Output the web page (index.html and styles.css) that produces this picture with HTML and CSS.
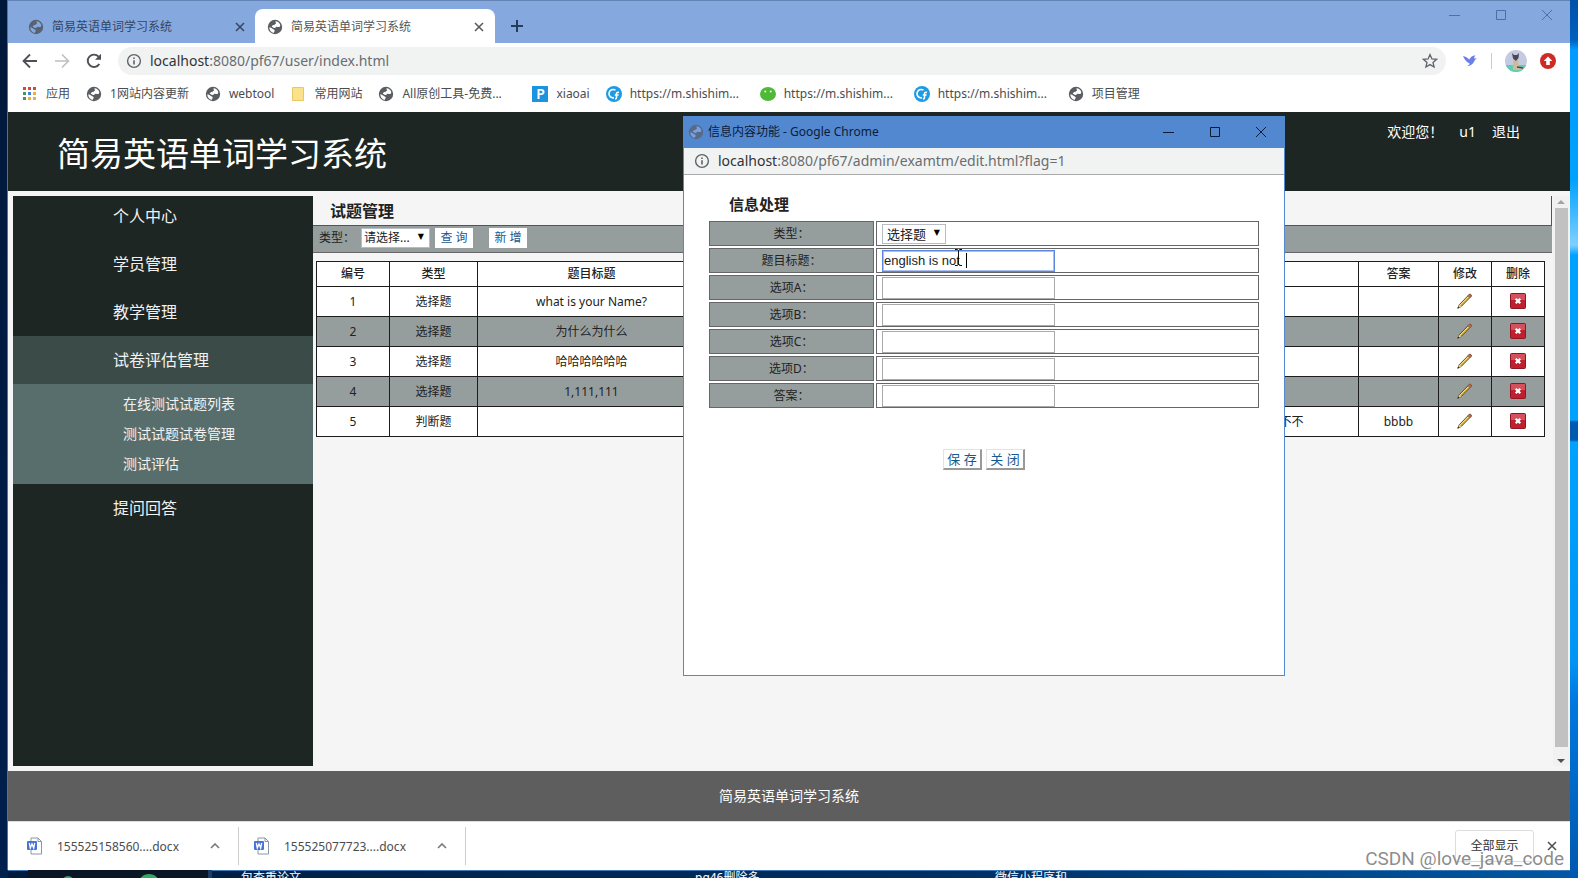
FILE: index.html
```html
<!DOCTYPE html>
<html lang="zh-CN">
<head>
<meta charset="utf-8">
<title>简易英语单词学习系统</title>
<link rel="stylesheet" href="styles.css">
</head>
<body>
<svg class="defs" aria-hidden="true">
  <symbol id="globe" viewBox="0 0 16 16"><circle cx="8" cy="8" r="7.200" fill="#5a5d61"/><path d="M8.600 2.200c1.600-.1 3.400 1.200 4.300 2.700.6 1.400.4 2.600-.6 3-1 .3-1.900-.4-2.800-.2-1.100.2-.8 1.500-2 1.400-1-.1-1.300-.9-2.300-1.100-.6-.2-.3-1.200.4-1.500.9-.3 1.700.1 1.900-.7.2-.9 1.500-.5 1.500-1.500 0-.8-.9-1.200-.4-2.100zM2.300 8.200c1.100.3 2.300.7 3.200 1.500.9.900 2.200.7 2.200 1.900 0 1-.9 1.300-1 2.400-2.600-.5-4.500-3-4.400-5.800z" fill="#fff"/></symbol>
  <symbol id="globe-dim" viewBox="0 0 16 16"><circle cx="8" cy="8" r="7.200" fill="#5a6170"/><path d="M8.600 2.200c1.600-.1 3.400 1.200 4.300 2.700.6 1.400.4 2.600-.6 3-1 .3-1.900-.4-2.800-.2-1.100.2-.8 1.500-2 1.400-1-.1-1.300-.9-2.300-1.100-.6-.2-.3-1.200.4-1.500.9-.3 1.700.1 1.900-.7.2-.9 1.500-.5 1.500-1.500 0-.8-.9-1.200-.4-2.100zM2.300 8.200c1.100.3 2.300.7 3.200 1.500.9.900 2.200.7 2.200 1.900 0 1-.9 1.300-1 2.400-2.600-.5-4.500-3-4.400-5.800z" fill="#85a9df"/></symbol>
  <symbol id="info" viewBox="0 0 16 16"><circle cx="8" cy="8" r="6.400" fill="none" stroke="#5f6368" stroke-width="1.400"/><path d="M7.200 7.200h1.600v4.300H7.200zM7.200 4.400h1.600V6H7.200z" fill="#5f6368"/></symbol>
  <symbol id="cross" viewBox="0 0 10 10"><path d="M1 1l8 8M9 1l-8 8" fill="none" stroke="currentColor" stroke-width="1.500"/></symbol>
  <symbol id="thincross" viewBox="0 0 12 12"><path d="M1 1l10 10M11 1L1 11" fill="none" stroke="currentColor"/></symbol>
  <symbol id="square" viewBox="0 0 12 12"><path d="M1.500 1.500h9v9h-9z" fill="none" stroke="currentColor"/></symbol>
  <symbol id="dash" viewBox="0 0 12 12"><path d="M0 6.500h11" fill="none" stroke="currentColor"/></symbol>
  <symbol id="cf" viewBox="0 0 16 16"><circle cx="8" cy="8" r="8" fill="#1d9be3"/><path d="M9.500 4.200A4.200 4.200 0 1 0 8 11.800M13 6.500c-2-.6-2.500.4-2.500 1.500v3.500c0 1-.6 1.500-1.500 1.500M8.800 9h3.800" fill="none" stroke="#fff" stroke-width="1.600"/></symbol>
  <symbol id="doc" viewBox="0 0 16 18"><path d="M4 1h7l3.500 3.500V17H4z" fill="#fff" stroke="#8797a8"/><path d="M11 1v3.500h3.500" fill="none" stroke="#8797a8"/><rect y="4" width="10" height="9" rx="1" fill="#4472d8"/><path d="M2.300 6l1 5L5 7l1.700 4 1-5" fill="none" stroke="#fff" stroke-width="1.300"/></symbol>
  <symbol id="up" viewBox="0 0 10 6"><path d="M1 5l4-4 4 4" fill="none" stroke="#777" stroke-width="1.600"/></symbol>
  <symbol id="pencil" viewBox="0 0 16 16"><path d="M.8 15.200l1.500-3.500L12.300 1.400c1-.8 2.700.7 2 1.800L4.200 13.500z" fill="#e3b63a" stroke="#4f3f1a" stroke-width=".9"/><path d="M3 12L12.300 2.700" stroke="#f9e48c" stroke-width=".9"/><path d="M12 1.600c1-.9 3 .8 2.200 1.900l-1.300 1.200-2.200-1.900z" fill="#c66a50" stroke="#7d4a3c" stroke-width=".5"/><path d="M.8 15.200l1.500-3.500 1.900 1.800z" fill="#e5d3a4"/><path d="M.5 15.500l.8-2 1.200 1.200z" fill="#222"/></symbol>
  <symbol id="delete" viewBox="0 0 16 16"><rect x=".5" y=".5" width="15" height="15" rx="1" fill="#bf1f2f" stroke="#8f1522"/><path d="M1 1h14v6H1z" fill="#d4505c"/><path d="M5.700 5.700l4.600 4.600M10.300 5.700l-4.600 4.600" stroke="#fff" stroke-width="2.200"/></symbol>
</svg>

<div class="desktop">
  <div class="browser">
    <div class="tabstrip">
      <div class="tab"><svg class="i16"><use href="#globe-dim"/></svg><span class="tab-name">简易英语单词学习系统</span><button class="plain" aria-label="关闭标签页"><svg class="i10"><use href="#cross"/></svg></button></div>
      <div class="tab tab-active"><svg class="i16"><use href="#globe"/></svg><span class="tab-name">简易英语单词学习系统</span><button class="plain" aria-label="关闭标签页"><svg class="i10"><use href="#cross"/></svg></button></div>
      <button class="plain new-tab" aria-label="新标签页"><svg width="14" height="14" viewBox="0 0 14 14"><path d="M7 1v12M1 7h12" stroke="#263d5c" stroke-width="2"/></svg></button>
      <div class="win-controls">
        <button class="plain" aria-label="最小化"><svg class="i12"><use href="#dash"/></svg></button>
        <button class="plain" aria-label="最大化"><svg class="i12"><use href="#square"/></svg></button>
        <button class="plain" aria-label="关闭"><svg class="i12"><use href="#thincross"/></svg></button>
      </div>
    </div>

    <div class="toolbar">
      <button class="plain" aria-label="后退"><svg class="i16" viewBox="0 0 16 16"><path d="M15 8H2M8 1.500L1.500 8 8 14.500" fill="none" stroke="#4d5156" stroke-width="1.800"/></svg></button>
      <button class="plain" aria-label="前进"><svg class="i16" viewBox="0 0 16 16"><path d="M1 8h13M8 1.500L14.500 8 8 14.500" fill="none" stroke="#bdbfc2" stroke-width="1.600"/></svg></button>
      <button class="plain" aria-label="刷新"><svg class="i16" viewBox="0 0 16 16"><path d="M13.300 11A6.200 6.200 0 1 1 12.600 3.700" fill="none" stroke="#4d5156" stroke-width="1.900"/><path d="M15 .8v6H9z" fill="#4d5156"/></svg></button>
      <div class="omnibox">
        <svg class="i16"><use href="#info"/></svg>
        <span class="url"><span class="host">localhost</span>:8080/pf67/user/index.html</span>
        <svg class="i16" viewBox="0 0 16 16"><path d="M8 1.600l1.900 4.300 4.700.4-3.600 3.100 1.100 4.600L8 11.600 3.900 14 5 9.400 1.400 6.300l4.700-.4z" fill="none" stroke="#5f6368" stroke-width="1.300"/></svg>
      </div>
      <div class="extensions">
        <svg class="i16" viewBox="0 0 16 16"><path d="M1 3c2.500.4 4.500 1.700 6.200 3.600C8.500 4 10.500 2.600 13.500 2.200c-1 1.200-1.300 2.200-1.300 3.200l2.800-.2c-1.600.9-2.300 2-3 3.500-1.200 2.600-3.500 4.300-7 4.300 1.300-.6 2.300-1.400 2.800-2.300C5.200 9.600 2.600 7 1 3z" fill="#6b7fe8"/></svg>
        <span class="divider"></span>
        <svg class="i22" viewBox="0 0 22 22"><clipPath id="round"><circle cx="11" cy="11" r="11"/></clipPath><g clip-path="url(#round)"><path d="M0 0h22v22H0z" fill="#c4cae2"/><path d="M0 15h22v7H0z" fill="#5fcdae"/><path d="M8 8l2 2h3l1 6 4 2-1 2H8z" fill="#cdbb9e"/><path d="M7 3l2 2h3l2-2-.5 5L11 11 8 8.500z" fill="#4c4650"/><path d="M12 17l6 1" stroke="#4c4650" stroke-width="1.500"/></g></svg>
        <svg class="i16" viewBox="0 0 16 16"><circle cx="8" cy="8" r="8" fill="#d02a25"/><path d="M8 3.500l4.300 4.600H9.800V12H6.200V8.100H3.700z" fill="#fff"/></svg>
      </div>
    </div>

    <nav class="bookmarks" aria-label="书签">
      <a class="mark" href="#"><svg class="i16" viewBox="0 0 16 16"><path d="M1 1h3v3H1zM6 1h3v3H6zM11 1h3v3h-3z" fill="#d9453b"/><path d="M1 6h3v3H1z" fill="#32a05a"/><path d="M6 6h3v3H6z" fill="#4181d8"/><path d="M11 6h3v3h-3zM6 11h3v3H6zM11 11h3v3h-3z" fill="#e5b13c"/><path d="M1 11h3v3H1z" fill="#32a05a"/></svg>应用</a>
      <a class="mark" href="#"><svg class="i16"><use href="#globe"/></svg>1网站内容更新</a>
      <a class="mark" href="#"><svg class="i16"><use href="#globe"/></svg>webtool</a>
      <a class="mark" href="#"><svg class="i16" viewBox="0 0 16 16"><path d="M2.500 1.500h11v13h-11z" fill="#fbe28a" stroke="#e6c963"/></svg>常用网站</a>
      <a class="mark mark-full" href="#"><svg class="i16"><use href="#globe"/></svg>All原创工具-免费...</a>
      <a class="mark" href="#"><span class="p-logo">P</span>xiaoai</a>
      <a class="mark mark-full" href="#"><svg class="i16"><use href="#cf"/></svg>https://m.shishim...</a>
      <a class="mark mark-full" href="#"><svg class="i16" viewBox="0 0 16 16"><ellipse cx="8" cy="8" rx="8" ry="7" fill="#4db935"/><circle cx="5.300" cy="5.500" r="1" fill="#fff"/><circle cx="10.700" cy="5.500" r="1" fill="#fff"/></svg>https://m.shishim...</a>
      <a class="mark mark-full" href="#"><svg class="i16"><use href="#cf"/></svg>https://m.shishim...</a>
      <a class="mark" href="#"><svg class="i16"><use href="#globe"/></svg>项目管理</a>
    </nav>

    <header class="site-header">
      <h1>简易英语单词学习系统</h1>
      <div class="user"><span>欢迎您！</span><span>u1</span><a href="#">退出</a></div>
    </header>

    <div class="body">
      <nav class="sidebar" aria-label="菜单">
        <a class="item first" href="#">个人中心</a>
        <a class="item" href="#">学员管理</a>
        <a class="item" href="#">教学管理</a>
        <a class="item open" href="#">试卷评估管理</a>
        <div class="submenu">
          <a href="#">在线测试试题列表</a>
          <a href="#">测试试题试卷管理</a>
          <a href="#">测试评估</a>
        </div>
        <a class="item" href="#">提问回答</a>
      </nav>
      <main class="content">
        <h2>试题管理</h2>
        <form class="filter">
          <label for="kind">类型：</label>
          <span class="pick"><select id="kind"><option>请选择...</option></select><span class="arrow">▼</span></span>
          <button class="action" type="button">查 询</button>
          <button class="action add" type="button">新 增</button>
        </form>
        <table class="grid">
          <colgroup><col class="c-no"><col class="c-kind"><col class="c-title"><col><col><col><col class="c-d"><col class="c-answer"><col class="c-op"><col class="c-op"></colgroup>
          <thead><tr><th>编号</th><th>类型</th><th>题目标题</th><th></th><th></th><th></th><th></th><th>答案</th><th>修改</th><th>删除</th></tr></thead>
          <tbody>
            <tr><td>1</td><td>选择题</td><td>what is your Name?</td><td></td><td></td><td></td><td></td><td></td><td><button class="plain" aria-label="修改"><svg class="i16"><use href="#pencil"/></svg></button></td><td><button class="plain" aria-label="删除"><svg class="i16"><use href="#delete"/></svg></button></td></tr>
            <tr><td>2</td><td>选择题</td><td>为什么为什么</td><td></td><td></td><td></td><td></td><td></td><td><button class="plain" aria-label="修改"><svg class="i16"><use href="#pencil"/></svg></button></td><td><button class="plain" aria-label="删除"><svg class="i16"><use href="#delete"/></svg></button></td></tr>
            <tr><td>3</td><td>选择题</td><td>哈哈哈哈哈哈</td><td></td><td></td><td></td><td></td><td></td><td><button class="plain" aria-label="修改"><svg class="i16"><use href="#pencil"/></svg></button></td><td><button class="plain" aria-label="删除"><svg class="i16"><use href="#delete"/></svg></button></td></tr>
            <tr><td>4</td><td>选择题</td><td>1,111,111</td><td></td><td></td><td></td><td></td><td></td><td><button class="plain" aria-label="修改"><svg class="i16"><use href="#pencil"/></svg></button></td><td><button class="plain" aria-label="删除"><svg class="i16"><use href="#delete"/></svg></button></td></tr>
            <tr><td>5</td><td>判断题</td><td></td><td></td><td></td><td></td><td>不不不不</td><td>bbbb</td><td><button class="plain" aria-label="修改"><svg class="i16"><use href="#pencil"/></svg></button></td><td><button class="plain" aria-label="删除"><svg class="i16"><use href="#delete"/></svg></button></td></tr>
          </tbody>
        </table>
      </main>
      <div class="scrollbar"><svg width="8" height="4" viewBox="0 0 8 4"><path d="M0 4l4-4 4 4z" fill="#a3a3a3"/></svg><div class="thumb"></div><svg width="8" height="4" viewBox="0 0 8 4"><path d="M0 0l4 4 4-4z" fill="#505050"/></svg></div>
    </div>

    <footer class="site-footer">简易英语单词学习系统</footer>

    <div class="downloads">
      <div class="file"><svg width="16" height="18"><use href="#doc"/></svg><span class="file-name">155525158560....docx</span><button class="plain" aria-label="更多"><svg width="10" height="6"><use href="#up"/></svg></button></div>
      <div class="file"><svg width="16" height="18"><use href="#doc"/></svg><span class="file-name">155525077723....docx</span><button class="plain" aria-label="更多"><svg width="10" height="6"><use href="#up"/></svg></button></div>
      <button class="show-all">全部显示</button>
      <button class="plain" aria-label="关闭下载栏"><svg class="i10"><use href="#cross"/></svg></button>
    </div>
  </div>

  <div class="desk-icons">
    <div class="preview"><i></i><i></i></div>
    <span class="n1">包查重论文</span><span class="n2">pg46删除多</span><span class="n3">微信小程序和</span>
  </div>

  <section class="popup" aria-label="信息内容功能">
    <div class="popup-title">
      <svg class="i16 faded"><use href="#globe-dim"/></svg><span class="popup-name">信息内容功能 - Google Chrome</span>
      <div class="popup-controls">
        <button class="plain" aria-label="最小化"><svg class="i12"><use href="#dash"/></svg></button>
        <button class="plain" aria-label="最大化"><svg class="i12"><use href="#square"/></svg></button>
        <button class="plain" aria-label="关闭"><svg class="i12"><use href="#thincross"/></svg></button>
      </div>
    </div>
    <div class="popup-url"><svg class="i16"><use href="#info"/></svg><span class="url"><span class="host">localhost</span>:8080/pf67/admin/examtm/edit.html?flag=1</span></div>
    <form class="edit">
      <h3>信息处理</h3>
      <div class="row"><label for="f0">类型：</label><div class="value"><span class="pick"><select id="f0"><option>选择题</option></select><span class="arrow">▼</span></span></div></div>
      <div class="row"><label for="f1">题目标题：</label><div class="value"><input id="f1" class="focused" value="english is not "><span class="caret"></span><svg class="ibeam" width="7" height="17" viewBox="0 0 7 17"><path d="M0 .5h2.500l1 1 1-1H7M0 16.500h2.500l1-1 1 1H7M3.500 1.500v14" fill="none" stroke="#111"/></svg></div></div>
      <div class="row"><label for="f2">选项A：</label><div class="value"><input id="f2"></div></div>
      <div class="row"><label for="f3">选项B：</label><div class="value"><input id="f3"></div></div>
      <div class="row"><label for="f4">选项C：</label><div class="value"><input id="f4"></div></div>
      <div class="row"><label for="f5">选项D：</label><div class="value"><input id="f5"></div></div>
      <div class="row"><label for="f6">答案：</label><div class="value"><input id="f6"></div></div>
      <div class="buttons"><button type="button">保 存</button><button type="button">关 闭</button></div>
    </form>
  </section>

  <div class="watermark">CSDN @love_java_code</div>
</div>
</body>
</html>
```

FILE: styles.css
```css
* { box-sizing: border-box; }
body { margin: 0; font: 12px/16px "Noto Sans", "Noto Sans CJK SC", sans-serif; color: #222; }
a { color: inherit; text-decoration: none; }
svg { flex: none; display: block; }
.defs { position: absolute; width: 0; height: 0; }
.i10 { width: 10px; height: 10px; }
.i12 { width: 12px; height: 12px; }
.i16 { width: 16px; height: 16px; }
.i22 { width: 22px; height: 22px; }
.plain { border: 0; padding: 0; background: none; color: inherit; flex: none; display: grid; place-items: center; }

.desktop {
  position: relative; min-height: 100vh; display: flex; flex-direction: column; overflow: hidden;
  background:
    linear-gradient(#00183a, #001f4d) left / 8px 100% no-repeat,
    linear-gradient(#0050a8 0, #0060c0 40px, #009cff 50px, #00a2ff 180px, #7fd0ff 245px, #00a2ff 255px, #00a2ff 420px, #0058b0 422px, #0058b0 440px, #00a2ff 442px, #0095f5 660px, #0078e0 700px, #0058ae 100%) right / 8px 100% no-repeat,
    linear-gradient(90deg, #001a3c, #002f63 60%, #0058a5);
}
.browser { flex: 1; margin: 0 8px; display: flex; flex-direction: column; background: #fff; box-shadow: -1px 0 #3c78b8, 0 1px #3c78b8; border-top: 1px solid #6484b5; }

.tabstrip { display: flex; align-items: flex-end; height: 42px; background: #85a9df; color: #34465f; }
.tab { display: flex; align-items: center; gap: 8px; width: 247px; height: 34px; padding: 2px 10px 0 20px; }
.tab-active { width: 240px; padding-left: 12px; padding-right: 11px; background: #fff; border-radius: 8px 8px 0 0; color: #54575b; }
.tab-name { flex: 1; }
.new-tab { width: 44px; height: 34px; }
.win-controls { display: flex; gap: 34px; margin-left: auto; align-self: flex-start; padding: 8px 17px 0 0; color: #4c6fa8; }

.toolbar { display: flex; align-items: center; gap: 16px; height: 35px; padding: 0 14px; }
.omnibox { flex: 1; display: flex; align-items: center; gap: 8px; height: 28px; padding: 0 8px; border-radius: 14px; background: #f1f3f3; }
.url { flex: 1; font-size: 14px; line-height: 20px; color: #6a6d70; }
.host { color: #303336; }
.extensions { display: flex; align-items: center; gap: 13px; }
.divider { width: 1px; height: 16px; background: #ccc; }

.bookmarks { display: flex; align-items: center; gap: 16px; height: 34px; padding: 0 14px 2px; color: #4a4d50; }
.mark { display: flex; align-items: center; gap: 8px; white-space: nowrap; }
.mark-full { width: 138px; }
.p-logo { width: 16px; height: 16px; background: #1b93dd; color: #fff; text-align: center; font-weight: 600; font-size: 14px; }

.site-header { display: flex; align-items: center; justify-content: space-between; min-height: 79px; padding: 0 50px 0 49px; background: #1e2624; color: #fff; }
h1 { margin: 4px 0 0; font-size: 33px; line-height: 48px; font-weight: 400; }
.user { display: flex; gap: 16px; align-self: flex-start; padding-top: 10px; font-size: 14px; line-height: 20px; }

.body { flex: 1; display: flex; padding: 5px 1px 5px 5px; background: #f5f5f5; }
.sidebar { width: 300px; background: #1e2624; color: #f2f2f2; }
.item { display: block; padding-left: 100px; font-size: 16px; line-height: 48px; }
.first { line-height: 40px; padding-bottom: 4px; }
.open { background: #3a4b48; }
.submenu { padding: 5px 0 5px 110px; background: #586e6c; font-size: 14px; line-height: 30px; }
.submenu a { display: block; }

.content { flex: 1; min-width: 0; }
h2 { margin: 0; padding: 1px 0 0 17px; font-size: 16px; line-height: 28px; border-bottom: 1px solid #555; border-right: 1px solid #555; }
.filter { display: flex; align-items: center; height: 27px; padding: 0 0 2px 6px; background: #969e9d; border-bottom: 1px solid #666; }
.filter label { width: 42px; }
.pick { position: relative; display: inline-block; }
.pick select { appearance: none; display: block; height: 20px; margin: 0; border: 1px solid #b5bcc4; border-radius: 0; background: #fff; padding: 0 4px; color: #222; font: 13px/18px "Noto Sans", "Noto Sans CJK SC", sans-serif; }
.arrow { position: absolute; right: 6px; top: 0; font: 8px/18px "DejaVu Sans", sans-serif; color: #000; pointer-events: none; }
.filter select { width: 69px; font-size: 12px; padding: 0 2px; }
.action { height: 20px; width: 38px; margin-left: 5px; border: 0; padding: 0; background: #fff; color: #17588f; font: 12px/18px "Noto Sans", "Noto Sans CJK SC", sans-serif; white-space: pre; }
.add { margin-left: 16px; }
.grid { width: calc(100% - 10px); margin: 8px 0 0 3px; table-layout: fixed; border-collapse: collapse; background: #fff; text-align: center; }
.grid th, .grid td { border: 1px solid #1c1c1c; padding: 0; height: 30px; }
.grid th { height: 25px; font-weight: 500; }
.grid tbody tr:nth-child(even) { background: #969e9d; }
.grid .plain { margin: 0 auto; padding-bottom: 2px; }
.c-no { width: 73px; }
.c-kind { width: 88px; }
.c-title { width: 228px; }
.c-d { width: 158px; }
.c-answer { width: 80px; }
.c-op { width: 53px; }
.scrollbar { display: flex; flex-direction: column; align-items: center; gap: 4px; width: 16px; margin-left: 1px; padding: 4px 0 3px; background: #f1f1f1; }
.thumb { flex: 1; width: 13px; margin-bottom: 8px; background: #c1c1c1; }

.site-footer { min-height: 50px; display: grid; place-items: center; background: #5e5e5e; color: #fff; font-size: 14px; line-height: 20px; }
.downloads { display: flex; align-items: center; height: 49px; padding: 0 13px 0 0; border-top: 1px solid #ddd; color: #4a4d50; }
.file { display: flex; align-items: center; gap: 14px; width: 231px; height: 38px; padding: 0 18px 0 19px; border-right: 1px solid #ccc; }
.file + .file { width: 227px; padding-left: 15px; }
.file-name { flex: 1; padding-top: 2px; }
.show-all { margin: 0 13px 0 auto; width: 79px; height: 32px; border: 1px solid #ddd; border-radius: 3px; background: #fff; color: #333; padding: 0; font: inherit; }

.desk-icons { position: relative; height: 8px; overflow: hidden; color: #fff; }
.desk-icons span { position: absolute; top: 0; white-space: nowrap; }
.n1 { left: 241px; }
.n2 { left: 695px; }
.n3 { left: 995px; }
.preview { position: absolute; left: 28px; top: 0; width: 184px; height: 8px; background: #0a1626; border-right: 4px solid #1b3c66; }
.preview i { position: absolute; top: 6px; left: 34px; width: 12px; height: 12px; border-radius: 50%; background: #35a860; }
.preview i + i { top: 4px; left: 110px; width: 22px; height: 22px; }

.popup { position: absolute; left: 683px; top: 116px; width: 602px; min-height: 560px; background: #fff; border: 1px solid #5288d0; }
.popup-title { display: flex; align-items: center; gap: 4px; height: 31px; padding: 0 17px 2px 4px; background: #5288d0; color: #0c1b38; }
.faded { opacity: .75; }
.popup-controls { display: flex; gap: 34px; margin-left: auto; }
.popup-url { display: flex; align-items: center; gap: 8px; height: 27px; padding-left: 10px; background: #f1f3f3; border-bottom: 1px solid #aaa; }
.edit { padding: 19px 25px 0; }
h3 { margin: 0; padding: 0 0 7px 20px; font-size: 15px; line-height: 20px; }
.row { display: flex; gap: 2px; height: 25px; margin-bottom: 2px; }
.row label { width: 30%; border: 1px solid #666; background: #969e9d; text-align: center; line-height: 23px; }
.value { position: relative; flex: 1; display: flex; align-items: center; border: 1px solid #666; padding-left: 5px; }
.value input { width: 173px; height: 22px; padding: 0 1px; border: 1px solid #aaa; background: #fff; color: #222; font: 13px/20px "Liberation Sans", Arial, sans-serif; }
.value .focused { border-color: #5b86e0; outline: 1px solid #a9c2f3; outline-offset: -2px; }
.value select { width: 64px; }
.caret { position: absolute; left: 89px; top: 4px; width: 1px; height: 15px; background: #000; }
.ibeam { position: absolute; left: 78px; top: 0; }
.buttons { display: flex; justify-content: center; gap: 4px; margin-top: 41px; }
.buttons button { width: 39px; height: 21px; padding: 0; border: 1px solid #e3e3e3; border-right: 2px solid #999; border-bottom: 2px solid #999; background: #fff; color: #17588f; font: 13px/16px "Noto Sans", "Noto Sans CJK SC", sans-serif; }

.watermark { position: absolute; right: 14px; bottom: 8px; font: 19px/22px Roboto, "Liberation Sans", sans-serif; color: rgba(110, 110, 110, .8); }
```
